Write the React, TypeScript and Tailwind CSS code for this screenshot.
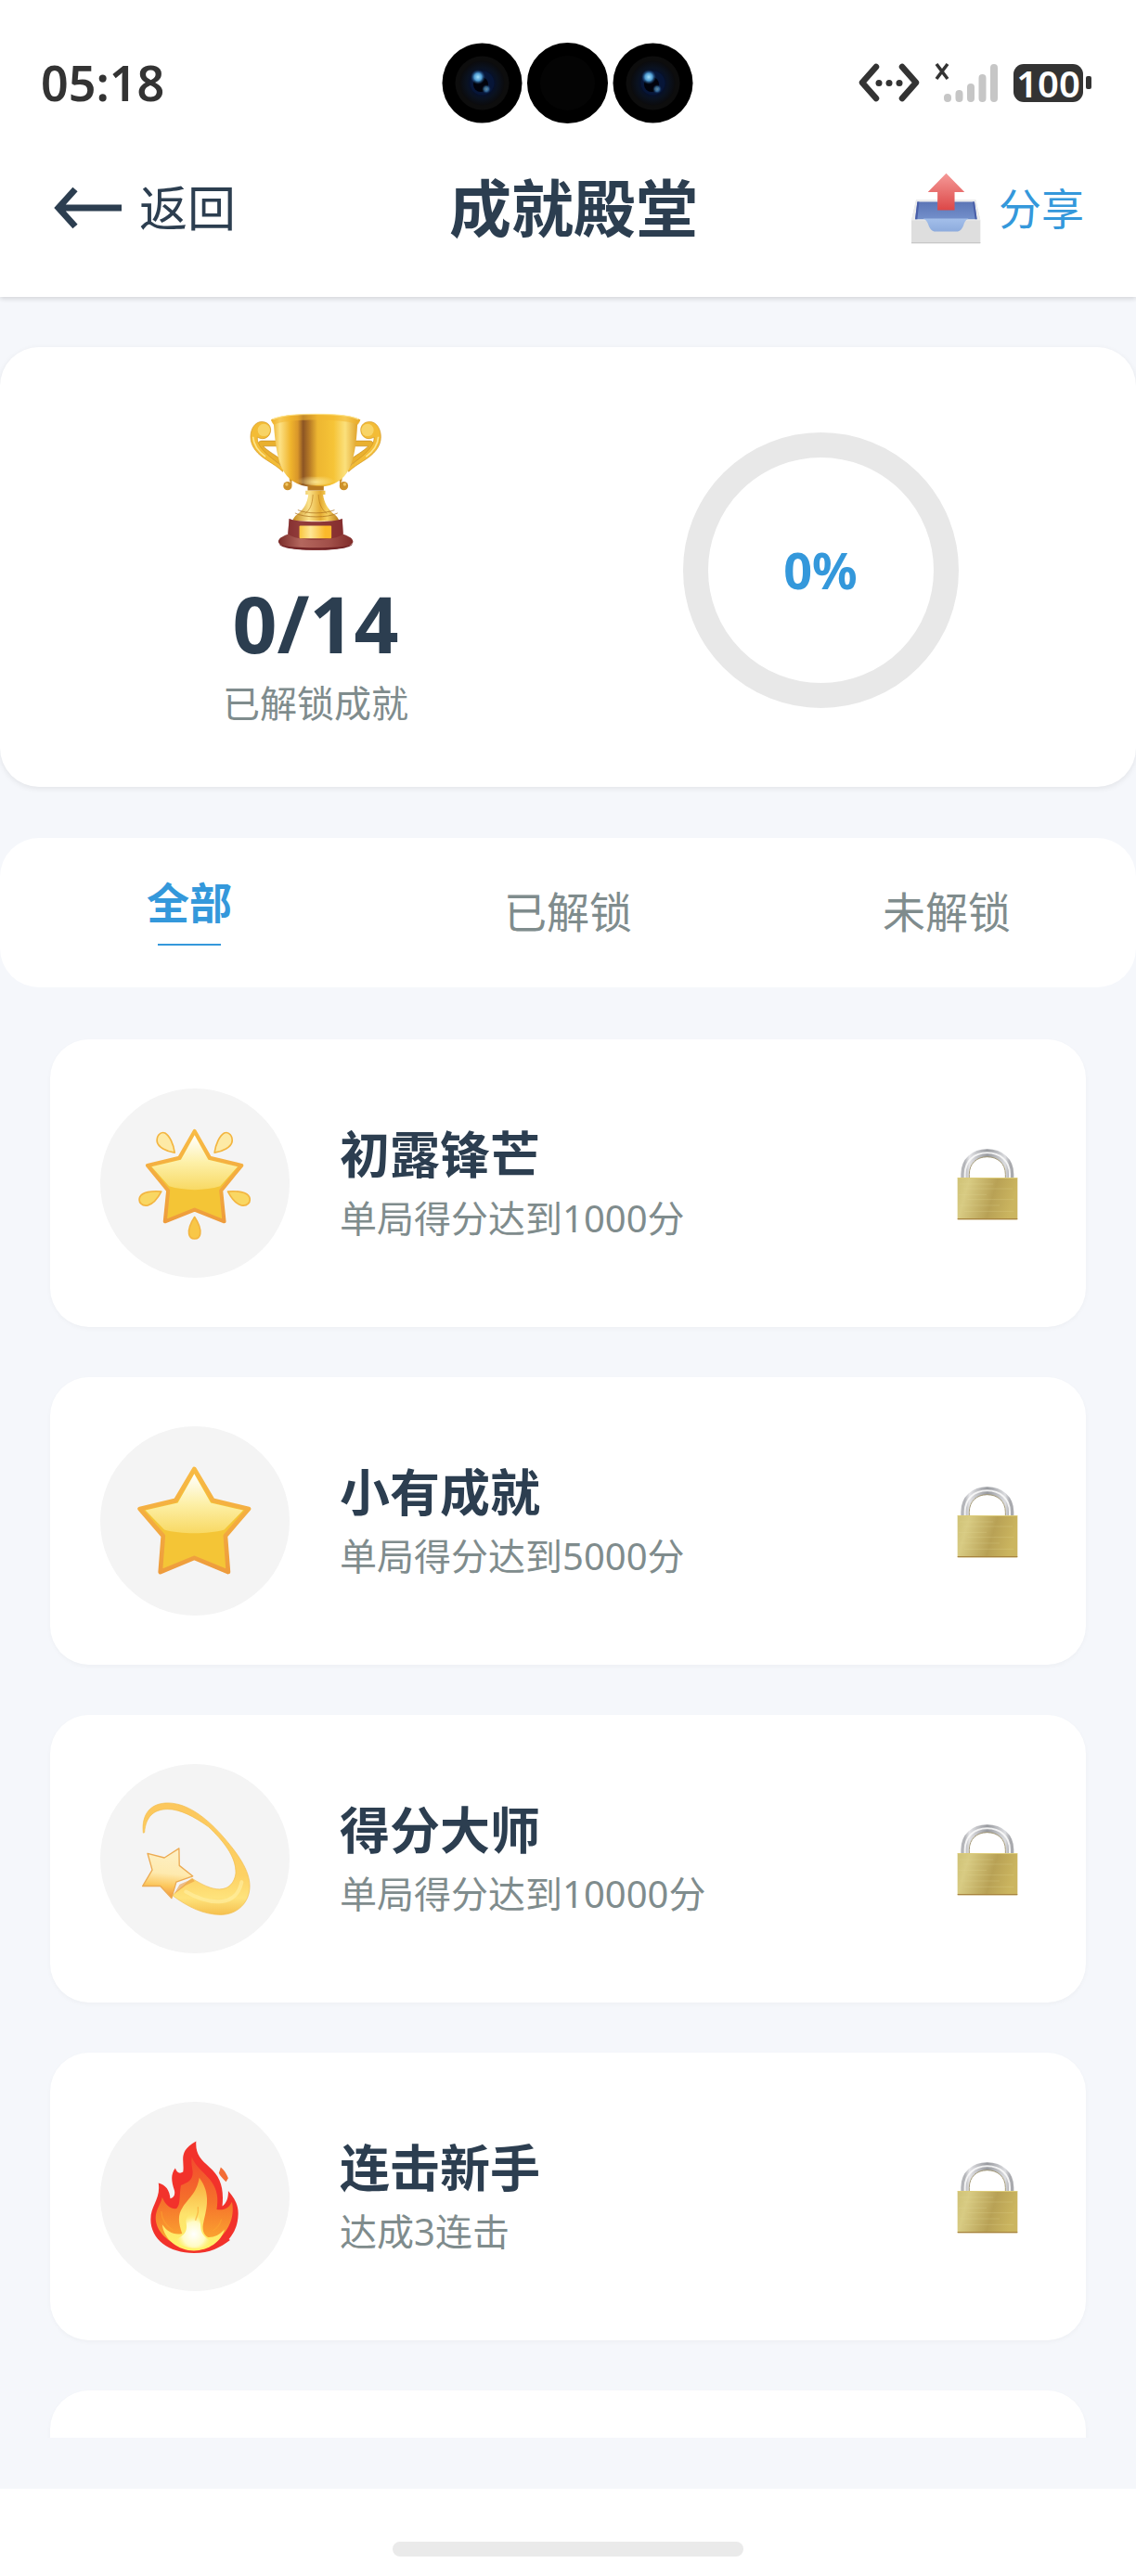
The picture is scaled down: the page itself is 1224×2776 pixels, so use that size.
import React, { useState } from 'react';

const CameraLens = () => (
  <svg className="size-[87px]" viewBox="0 0 87 87" aria-hidden="true">
    <defs>
      <radialGradient id="lensGlass" cx="50%" cy="50%" r="50%">
        <stop offset="0" stopColor="#02030c" />
        <stop offset="0.5" stopColor="#06102c" />
        <stop offset="0.7" stopColor="#0a1220" />
        <stop offset="1" stopColor="#0b0b0d" />
      </radialGradient>
      <radialGradient id="lensGlint">
        <stop offset="0" stopColor="#a5e3ff" />
        <stop offset="0.5" stopColor="#4f9bd0" />
        <stop offset="1" stopColor="#16407a" stopOpacity="0" />
      </radialGradient>
    </defs>
    <circle cx="43.500" cy="43.500" r="43" fill="#000" />
    <circle cx="43.500" cy="43.500" r="29" fill="#0d0d0d" />
    <circle cx="43.500" cy="43.500" r="24" fill="url(#lensGlass)" />
    <circle cx="43.500" cy="43.500" r="13" fill="#071638" />
    <circle cx="42" cy="45" r="8" fill="#01020a" />
    <circle cx="39" cy="37" r="8" fill="url(#lensGlint)" />
    <circle cx="48" cy="50" r="5" fill="url(#lensGlint)" opacity="0.6" />
  </svg>
);

const StatusBar = () => (
  <div className="grid h-[178px] grid-cols-3 items-center px-[44px] text-[#333]">
    <span className="text-[52px] leading-[60px] font-semibold">05:18</span>
    <div className="flex justify-center gap-[5px]">
      <CameraLens />
      <div className="size-[87px] shrink-0 rounded-full border-[14px] border-black bg-[#040404]" />
      <CameraLens />
    </div>
    <div className="flex items-center justify-end gap-4 pr-1">
      <svg className="h-[42px] w-[66px]" viewBox="0 0 66 42" fill="none" aria-hidden="true">
        <path d="M19 4 4 21l15 17M47 4l15 17-15 17" stroke="#333" strokeWidth="6.500" strokeLinecap="round" strokeLinejoin="round" />
        <g fill="#333">
          <circle cx="22" cy="21.500" r="3.500" />
          <circle cx="33" cy="21.500" r="3.500" />
          <circle cx="44" cy="21.500" r="3.500" />
        </g>
      </svg>
      <svg className="h-[44px] w-[69px]" viewBox="0 0 69 44" fill="none" aria-hidden="true">
        <path d="M2 2l12 16M14 2 2 18" stroke="#333" strokeWidth="3.500" />
        <path d="M14 38v1M26.500 34v5M39 27v12M51.500 17v22M64 6v33" stroke="#c6c6c6" strokeWidth="8" strokeLinecap="round" />
      </svg>
      <div className="flex items-center gap-[3px]">
        <span className="flex h-[41px] w-[75px] items-center justify-center rounded-[11px] bg-[#333] text-[40px] leading-[41px] font-semibold text-white">
          100
        </span>
        <span className="h-[14px] w-[6px] rounded-[2px] bg-[#333]" />
      </div>
    </div>
  </div>
);

const ShareIcon = () => (
  <svg className="h-[77px] w-[75px]" viewBox="0 0 224 230" aria-hidden="true">
    <defs>
      <linearGradient id="shareArrow" x1="0" y1="0" x2="0" y2="1">
        <stop offset="0" stopColor="#f59a98" />
        <stop offset="1" stopColor="#dc4747" />
      </linearGradient>
      <linearGradient id="shareInner" x1="0" y1="0" x2="0" y2="1">
        <stop offset="0" stopColor="#5c75b6" />
        <stop offset="1" stopColor="#7390cb" />
      </linearGradient>
      <linearGradient id="shareSlot" x1="0" y1="0" x2="0" y2="1">
        <stop offset="0" stopColor="#a3bfea" />
        <stop offset="1" stopColor="#8dabdd" />
      </linearGradient>
    </defs>
    <path d="M15 88h192l15 66v74H0v-74z" fill="#dedede" />
    <path d="M15 88h192l15 66H0z" fill="#ececec" />
    <path d="M19 94h184l8 56H12z" fill="url(#shareInner)" />
    <path d="M19 94h6l-6 56h-7zM197 94h6l8 56h-6z" fill="#4a5fa8" />
    <path d="M38 148h146c-10 5-12 10-16 21-5 14-12 21-22 21H77c-10 0-17-7-22-21-4-11-7-16-17-21z" fill="url(#shareSlot)" />
    <path d="M0 224h222v4H0z" fill="#c8c8c8" />
    <path d="M112 2l59 61h-32v58H84V63H53z" fill="url(#shareArrow)" />
  </svg>
);

const TrophyIcon = () => (
  <svg className="h-[150px] w-[143px]" viewBox="205 135 430 450" aria-hidden="true">
    <defs>
      <linearGradient id="cupBody" x1="0" x2="1" y1="0" y2="0">
        <stop offset="0" stopColor="#e9a820" />
        <stop offset="0.1" stopColor="#fde184" />
        <stop offset="0.22" stopColor="#efb42c" />
        <stop offset="0.3" stopColor="#d9962a" />
        <stop offset="0.36" stopColor="#8c5524" />
        <stop offset="0.43" stopColor="#b77a26" />
        <stop offset="0.52" stopColor="#edb631" />
        <stop offset="0.7" stopColor="#f6c437" />
        <stop offset="0.83" stopColor="#fbe07c" />
        <stop offset="1" stopColor="#d99418" />
      </linearGradient>
      <linearGradient id="cupStem" x1="0" x2="1" y1="0" y2="0">
        <stop offset="0" stopColor="#c58a1d" />
        <stop offset="0.35" stopColor="#fbe28a" />
        <stop offset="0.6" stopColor="#e4ab32" />
        <stop offset="0.75" stopColor="#f8d25e" />
        <stop offset="1" stopColor="#b87a1b" />
      </linearGradient>
      <linearGradient id="cupBase" x1="0" x2="1" y1="0" y2="0">
        <stop offset="0" stopColor="#7a2c2a" />
        <stop offset="0.3" stopColor="#b4675e" />
        <stop offset="0.7" stopColor="#a04e48" />
        <stop offset="1" stopColor="#802c2a" />
      </linearGradient>
      <linearGradient id="cupPlate" x1="0" x2="1" y1="0" y2="0">
        <stop offset="0" stopColor="#f9c63d" />
        <stop offset="0.35" stopColor="#fde695" />
        <stop offset="0.8" stopColor="#fbb92b" />
      </linearGradient>
      <radialGradient id="cupShine" cx="50%" cy="85%" r="30%">
        <stop offset="0" stopColor="#fff0a2" />
        <stop offset="1" stopColor="#fff0a2" stopOpacity="0" />
      </radialGradient>
      <g id="cupHandle">
        <path
          d="M292 228h-48c-10 0-14 8-8 18 16 27 50 44 72 62 20 17 28 32 27 50l8-2c2-22-5-42-25-59-25-21-57-37-69-52h43z"
          fill="#e9b02f"
          stroke="#c58b1e"
          strokeWidth="2"
        />
        <path
          d="M273 192c0-16-13-26-29-26-21 0-36 22-36 49 0 34 25 58 52 75 22 14 41 26 52 38l3-10c-17-19-44-36-62-55-16-17-24-31-23-47 20 12 43 0 43-24z"
          fill="#f3bc36"
          stroke="#d09420"
          strokeWidth="2"
        />
        <circle cx="251" cy="193" r="20" fill="#f8d466" />
        <path d="M216 215c2 28 18 48 40 64" stroke="#fde48c" strokeWidth="5" fill="none" />
        <path d="M339 350v22" stroke="#cd912a" strokeWidth="5" />
        <circle cx="328" cy="374" r="14" fill="#cd912a" />
        <circle cx="325" cy="369" r="5" fill="#f3c864" />
      </g>
    </defs>
    <use href="#cupHandle" />
    <use href="#cupHandle" transform="translate(838 0) scale(-1 1)" />
    <path d="M274 160c38-26 252-26 290 0l-10 16c-3 60-10 118-33 154-22 34-58 48-102 48s-80-14-102-48c-23-36-29-94-34-154z" fill="url(#cupBody)" />
    <path d="M285 176c-5-3-10-9-10-16 38-26 250-26 288 0 0 7-4 13-9 16-30-21-239-21-269 0z" fill="#f3b72f" opacity="0.550" />
    <path d="M281 158c40-22 236-22 276 0" stroke="#ffe793" strokeWidth="4" fill="none" opacity="0.800" />
    <path d="M310 300c10 46 50 72 109 72s99-26 108-72c-14 26-50 44-108 44s-95-18-109-44z" fill="url(#cupShine)" opacity="0.800" />
    <path d="M393 374h52v15h-52z" fill="#b87b22" />
    <path d="M386 389h64v13h-7c2 25 17 48 33 62 14 10 18 18 18 24H345c0-6 4-14 17-24 18-14 31-37 33-62h-9z" fill="url(#cupStem)" />
    <path d="M352 462c30 16 108 16 138 0M361 452c30 13 86 13 119 0" stroke="#a96f1c" strokeWidth="3" fill="none" opacity="0.700" />
    <path d="M410 402c-2 34-10 50-26 62M428 402c2 34 12 50 28 62" stroke="#b3761a" strokeWidth="3" fill="none" opacity="0.600" />
    <path d="M333 480c26 13 146 13 172 0l3 51c20 7 32 14 32 24 0 18-62 27-121 27s-121-9-121-27c0-10 12-17 31-24z" fill="url(#cupBase)" />
    <path d="M333 480c26 13 146 13 172 0l3 49c-25 26-154 26-179 0z" fill="#7f2729" opacity="0.650" />
    <path d="M300 562c20 10 65 12 119 12s100-2 120-12c-6 14-64 20-120 20s-113-6-119-20z" fill="#742527" />
    <rect x="366" y="503" width="104" height="41" rx="3" fill="url(#cupPlate)" />
  </svg>
);

const StarGradients = ({ id }: { id: string }) => (
  <defs>
    <linearGradient id={`${id}Top`} x1="0" y1="0" x2="0" y2="1">
      <stop offset="0" stopColor="#ffffff" />
      <stop offset="0.5" stopColor="#fdf0a8" />
      <stop offset="1" stopColor="#f8d964" />
    </linearGradient>
    <linearGradient id={`${id}Edge`} x1="0" y1="0" x2="0" y2="1">
      <stop offset="0" stopColor="#f8bb45" />
      <stop offset="1" stopColor="#ee9c3c" />
    </linearGradient>
  </defs>
);

const GlowingStar = () => (
  <svg className="size-full" viewBox="4 0 608 608" aria-hidden="true">
    <StarGradients id="glow" />
    <g fill="#f9d763" stroke="#f3b540" strokeWidth="5" strokeLinejoin="round">
      <path d="M243 206c-4-28-16-54-31-63-15-6-29 10-25 30 4 15 28 29 56 33zM371 206c4-28 16-54 31-63 15-6 29 10 25 30-4 15-28 29-56 33z" fill="#fdeaa6" />
      <path d="M200 331c-30-3-62 2-69 18-6 17 8 30 26 26 15-4 32-23 43-44zM414 331c30-3 62 2 69 18 6 17-8 30-26 26-15-4-32-23-43-44z" />
      <path d="M307 413c-12 18-20 40-18 54 3 21 33 21 36 0 2-14-6-36-18-54z" fill="#f8c747" />
    </g>
    <path
      d="M307 137l49 86 102 24-66 81 10 99-95-38-95 38 10-99-66-81 102-24z"
      fill="#f4c536"
      stroke="url(#glowEdge)"
      strokeWidth="12"
      strokeLinejoin="round"
    />
    <path d="M307 150l44 79 94 22-56 63c-47 15-117 15-164 0l-56-63 94-22z" fill="url(#glowTop)" />
  </svg>
);

const Star = () => (
  <svg className="size-full" viewBox="2 0 608 608" aria-hidden="true">
    <StarGradients id="star" />
    <path
      d="M304 137l60 101 115 27-75 87 9 116-109-45-109 45 9-116-75-87 115-27z"
      fill="#f4c536"
      stroke="url(#starEdge)"
      strokeWidth="14"
      strokeLinejoin="round"
    />
    <path d="M304 153l53 93 104 24-61 62c-52 15-140 15-192 0l-61-62 104-24z" fill="url(#starTop)" />
  </svg>
);

const ShootingStar = () => (
  <svg className="size-full" viewBox="25 35 608 608" aria-hidden="true">
    <defs>
      <linearGradient id="trail" x1="0" y1="0" x2="0" y2="1">
        <stop offset="0" stopColor="#fcc75c" />
        <stop offset="0.65" stopColor="#fdd163" />
        <stop offset="0.85" stopColor="#fee37c" />
        <stop offset="1" stopColor="#f5c04e" />
      </linearGradient>
      <linearGradient id="trailStar" x1="0.500" y1="0" x2="0.400" y2="1">
        <stop offset="0" stopColor="#fdf0c6" />
        <stop offset="0.5" stopColor="#feeaaf" />
        <stop offset="0.75" stopColor="#fcc75c" />
        <stop offset="1" stopColor="#f0913d" />
      </linearGradient>
    </defs>
    <path
      d="M163 256c-6-61 24-96 79-96 60 0 120 44 172 102 54 61 91 115 91 165 0 54-41 92-93 92-55 0-106-25-155-62l62-55c36 22 63 35 89 35 30 0 48-21 52-50 3-55-43-108-87-150-46-33-91-57-131-57-43 0-71 22-75 75z"
      fill="url(#trail)"
      stroke="#f3bd4d"
      strokeWidth="2"
    />
    <path d="M300 445c44 26 82 35 116 31 34-4 56-27 63-62" stroke="#fff0a5" strokeWidth="12" strokeLinecap="round" fill="none" opacity="0.600" />
    <path d="M262 452l18-30 42-19 6 8-28 14z" fill="#e79a3f" opacity="0.600" />
    <path
      d="M177 322l54 14 47-30 1 55 43 34-53 19-15 52-36-39-57 0 31-52z"
      fill="url(#trailStar)"
      stroke="#ecab53"
      strokeWidth="4"
      strokeLinejoin="round"
    />
  </svg>
);

const Fire = () => (
  <svg className="size-full" viewBox="26 48 608 608" aria-hidden="true">
    <defs>
      <linearGradient id="fireMid" x1="0" y1="0" x2="0" y2="1">
        <stop offset="0" stopColor="#f24a2e" />
        <stop offset="0.5" stopColor="#f5722b" />
        <stop offset="1" stopColor="#fcb032" />
      </linearGradient>
      <linearGradient id="fireCore" x1="0" y1="0" x2="0" y2="1">
        <stop offset="0" stopColor="#f9a838" />
        <stop offset="0.5" stopColor="#fde26b" />
        <stop offset="1" stopColor="#fff36a" />
      </linearGradient>
      <radialGradient id="fireHeart" cx="50%" cy="65%" r="50%">
        <stop offset="0" stopColor="#ffffff" />
        <stop offset="0.6" stopColor="#fffbc6" />
        <stop offset="1" stopColor="#fff079" stopOpacity="0" />
      </radialGradient>
    </defs>
    <path
      d="M334 175c-3 40 14 58 42 82 35 30 48 66 42 126 14-10 20-29 19-49 20 22 33 45 32 75-1 36-13 60-30 80l4 3c-30 23-65 42-116 42-80 0-139-44-139-108 0-46 33-65 25-117 24 6 36 24 38 50 10-2 17-12 13-27-10-29-12-52 3-71 4 13 13 20 25 12 6-35-19-64 42-98z"
      fill="#f2322b"
    />
    <path
      d="M320 225c10 27 37 48 57 71 28 34 28 65 23 98 28 4 40-8 49-25 11 51-14 99-50 125-41 29-110 29-148 2-40-28-58-67-40-106 6-13 12-25 14-35 10 23 25 38 46 36 14-15 8-40 14-75 20-8 39-15 38-43-2-18-6-31-3-48z"
      fill="url(#fireMid)"
    />
    <path
      d="M344 292c-8 48-30 61-53 94-17 25-14 49-2 85-27 6-46-5-64-29 6 49 52 84 102 84 46 0 88-28 98-68-17 19-34 26-53 25-15-8-20-28-14-50 10-42 24-91-14-141z"
      fill="url(#fireCore)"
    />
    <path d="M340 388c-23 21-43 24-38 48 4 20 0 37-24 49-8 4-13 8-13 8 30 31 92 35 123 5-17-7-38-22-39-45-1-24-7-33-9-65z" fill="url(#fireHeart)" />
    <path d="M340 385c3 28-5 26-8 44M222 400c2 28 14 46 38 60M415 425c-4 18-15 30-28 37" stroke="#fca331" strokeWidth="4" fill="none" opacity="0.600" />
    <path d="M413 258c11 9 19 22 24 35l-7 12c-10-10-20-19-23-28z" fill="#f36d35" />
  </svg>
);

const LockIcon = () => (
  <svg className="h-[80px] w-[70px] shrink-0" viewBox="150 105 210 240" role="img" aria-label="未解锁">
    <defs>
      <linearGradient id="lockBody" x1="0" x2="1" y1="0" y2="0.200">
        <stop offset="0" stopColor="#cfc276" />
        <stop offset="0.2" stopColor="#d8cb83" />
        <stop offset="0.65" stopColor="#b8a155" />
        <stop offset="1" stopColor="#cbb55f" />
      </linearGradient>
      <linearGradient id="lockShackle" x1="0" x2="1" y1="0" y2="0">
        <stop offset="0" stopColor="#b4b5b9" />
        <stop offset="0.1" stopColor="#e4e4e7" />
        <stop offset="0.5" stopColor="#97999e" />
        <stop offset="0.9" stopColor="#dcdde0" />
        <stop offset="1" stopColor="#a9aaae" />
      </linearGradient>
    </defs>
    <path d="M182 210v-14c0-42 30-68 72-68s73 26 73 68v14" stroke="url(#lockShackle)" strokeWidth="26" fill="none" />
    <path d="M182 208v-12c0-42 30-69 72-69s73 27 73 69v12" stroke="#fafafa" strokeWidth="6" fill="none" opacity="0.900" />
    <path d="M196 208v-12c0-34 24-56 58-56s59 22 59 56v12" stroke="#a59a78" strokeWidth="3" fill="none" />
    <rect x="158" y="207" width="194" height="136" rx="3" fill="url(#lockBody)" />
    <path d="M164 228h110M176 243h160M162 262h90M190 278h150M164 297h130M180 316h160" stroke="#e6dc9c" strokeWidth="2" opacity="0.350" />
    <path d="M158 339h194v4H158z" fill="#a7833f" />
    <path d="M158 207h194v3H158z" fill="#dccb78" />
  </svg>
);

const achievements = [
  { title: '初露锋芒', desc: '单局得分达到1000分', Icon: GlowingStar },
  { title: '小有成就', desc: '单局得分达到5000分', Icon: Star },
  { title: '得分大师', desc: '单局得分达到10000分', Icon: ShootingStar },
  { title: '连击新手', desc: '达成3连击', Icon: Fire },
];

const tabs = ['全部', '已解锁', '未解锁'];

const cardClass =
  'flex h-[310px] shrink-0 items-center rounded-[42px] bg-white pl-[54px] pr-[71px] shadow-[0_2px_5px_rgba(0,0,0,0.03)]';

const App = () => {
  const [activeTab, setActiveTab] = useState('全部');

  return (
    <div className="flex h-screen flex-col overflow-hidden bg-[#f5f7fb] font-['Noto_Sans','Noto_Sans_CJK_SC',sans-serif] text-[#2c3e50]">
      <header className="shrink-0 bg-white pb-[50px] shadow-[0_2px_5px_rgba(0,0,0,0.14)]">
        <StatusBar />
        <div className="flex h-[92px] items-center justify-between px-[56px]">
          <button className="flex items-center gap-[18px] text-[52px] leading-[60px]">
            <svg className="h-[46px] w-[76px]" viewBox="0 0 76 46" fill="none" stroke="#2c3e50" strokeWidth="7" aria-hidden="true">
              <path d="M75 23H7M25 3 7 23l18 20" />
            </svg>
            返回
          </button>
          <h1 className="text-center text-[67px] leading-[72px] font-bold">成就殿堂</h1>
          <button className="flex items-center justify-end gap-[19px] text-[46px] leading-[60px] text-[#3498db]">
            <ShareIcon />
            分享
          </button>
        </div>
      </header>

      <main className="flex min-h-0 flex-1 flex-col pt-[54px] pb-[55px]">
        <section className="grid shrink-0 grid-cols-2 items-center rounded-[42px] bg-white px-[68px] pt-[70px] pb-[64px] shadow-[0_2px_6px_rgba(0,0,0,0.08)]">
          <div className="flex flex-col items-center">
            <TrophyIcon />
            <p className="mt-[26px] text-[84px] leading-[104px] font-bold">0/14</p>
            <p className="mt-2 text-[40px] leading-[52px] text-[#7f8c8d]">已解锁成就</p>
          </div>
          <div className="flex size-[297px] items-center justify-center justify-self-center rounded-full border-[27px] border-[#e8e8e8] text-[54px] leading-[64px] font-bold text-[#3498db]">
            0%
          </div>
        </section>

        <nav className="mt-[55px] grid h-[161px] shrink-0 grid-cols-3 rounded-[42px] bg-white pb-1">
          {tabs.map((tab) => (
            <button
              key={tab}
              onClick={() => setActiveTab(tab)}
              className={
                activeTab === tab
                  ? 'flex flex-col items-center justify-center text-[46px] leading-[54px] font-bold text-[#3498db]'
                  : 'flex flex-col items-center justify-center text-[46px] leading-[54px] text-[#7f8c8d]'
              }
            >
              {tab}
              {activeTab === tab && <span className="mt-[18px] h-[2px] w-[68px] bg-[#3498db]" />}
            </button>
          ))}
        </nav>

        <ul className="mt-[46px] flex min-h-0 flex-1 flex-col gap-[54px] overflow-hidden px-[54px] pt-[10px]">
          {achievements.map(({ title, desc, Icon }) => (
            <li key={title} className={cardClass}>
              <div className="size-[204px] shrink-0 rounded-full bg-[#f4f4f4]">
                <Icon />
              </div>
              <div className="ml-[54px] flex-1 pt-[3px]">
                <h2 className="text-[54px] leading-[72px] font-bold">{title}</h2>
                <p className="text-[40px] leading-[66px] text-[#7f8c8d]">{desc}</p>
              </div>
              <LockIcon />
            </li>
          ))}
          <li className={cardClass} />
        </ul>
      </main>

      <footer className="flex h-[94px] shrink-0 justify-center bg-white pt-[57px]">
        <div className="h-[16px] w-[378px] rounded-full bg-[#eaeaea]" />
      </footer>
    </div>
  );
};

export default App;
